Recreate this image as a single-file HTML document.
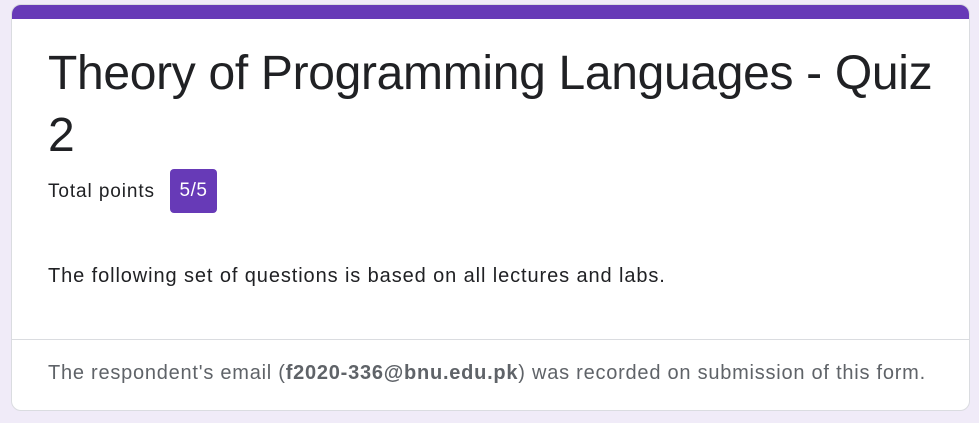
<!DOCTYPE html>
<html><head><style>
body{margin:0;background:#f0ebf8;width:979px;height:423px;overflow:hidden;font-family:"Liberation Sans",Arial,sans-serif;}
.card{position:absolute;left:11px;top:4px;width:959px;height:407px;background:#fff;border-radius:10px;border:1px solid #dadce0;box-sizing:border-box;overflow:hidden;}
.bar{position:absolute;left:-1px;top:-1px;right:-1px;height:15px;background:#673ab7;}
h1{position:absolute;left:36px;top:38px;margin:0;font-weight:400;font-size:48px;line-height:62px;color:#202124;white-space:nowrap;letter-spacing:-0.32px;}
.tp{position:absolute;left:36px;top:176px;font-size:19px;letter-spacing:0.9px;color:#202124;}
.badge{position:absolute;left:158px;top:164px;width:47px;height:44px;background:#673ab7;border-radius:4px;color:#fff;font-size:19px;letter-spacing:0.5px;line-height:44px;text-align:center;}
.desc{position:absolute;left:36px;top:260px;font-size:20px;letter-spacing:0.9px;color:#202124;white-space:nowrap;}
.line{position:absolute;left:0;right:0;top:334px;border-top:1px solid #dadce0;}
.foot{position:absolute;left:36px;top:357px;font-size:20px;letter-spacing:0.76px;color:#5f6368;white-space:nowrap;}
</style></head><body>
<div class="card"><div class="bar"></div>
<h1>Theory of Programming Languages - Quiz<br>2</h1>
<div class="tp">Total points</div>
<div class="badge">5/5</div>
<div class="desc">The following set of questions is based on all lectures and labs.</div>
<div class="line"></div>
<div class="foot">The respondent's email (<b>f2020-336@bnu.edu.pk</b>) was recorded on submission of this form.</div>
</div>
</body></html>
